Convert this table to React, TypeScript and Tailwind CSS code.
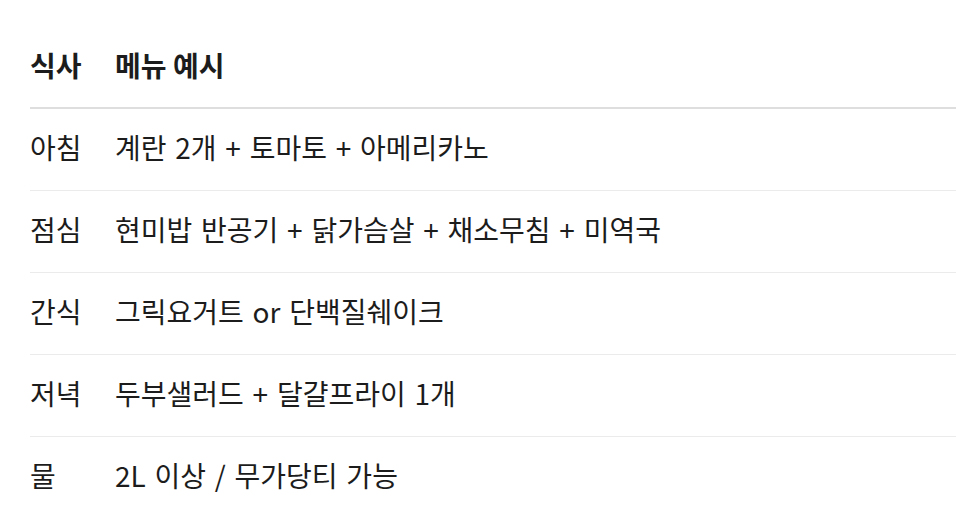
import React from "react";

const rows: [string, string][] = [
  ["아침", "계란 2개 + 토마토 + 아메리카노"],
  ["점심", "현미밥 반공기 + 닭가슴살 + 채소무침 + 미역국"],
  ["간식", "그릭요거트 or 단백질쉐이크"],
  ["저녁", "두부샐러드 + 달걀프라이 1개"],
  ["물", "2L 이상 / 무가당티 가능"],
];

export default function App() {
  return (
    <div
      className="w-[956px] h-[511px] bg-white pl-[30px] pt-[26px] overflow-hidden"
      style={{ fontFamily: '"Noto Sans CJK KR", "Noto Sans", sans-serif' }}
    >
      <table className="w-full border-collapse text-[28px] text-[#1c1c1c]">
        <thead>
          <tr className="border-b-2 border-[#dedede]">
            <th className="w-[85px] p-0 pb-[4px] h-[82px] text-left font-bold align-middle">식사</th>
            <th className="p-0 pb-[4px] h-[82px] text-left font-bold align-middle">메뉴 예시</th>
          </tr>
        </thead>
        <tbody className="[word-spacing:2.5px]">
          {rows.map(([a, b], i) => (
            <tr key={a} className={i < rows.length - 1 ? "border-b border-[#ebebeb]" : ""}>
              <td className="p-0 pb-[4px] h-[82px] align-middle font-normal">{a}</td>
              <td className="p-0 pb-[4px] h-[82px] align-middle font-normal">{b}</td>
            </tr>
          ))}
        </tbody>
      </table>
    </div>
  );
}
